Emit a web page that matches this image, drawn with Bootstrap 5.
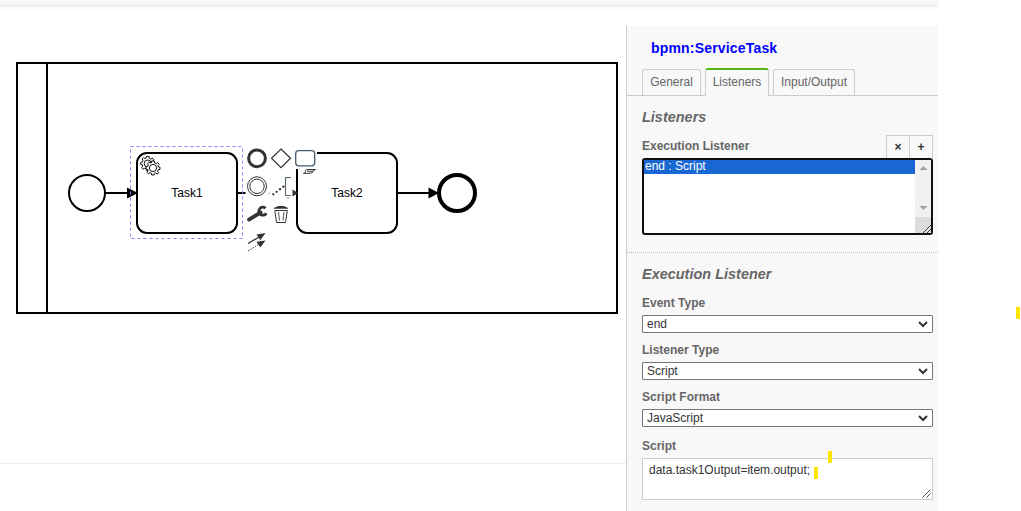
<!DOCTYPE html>
<html lang="en">
<head>
<meta charset="utf-8">
<meta name="viewport" content="width=device-width, initial-scale=1">
<title>Process modeler</title>
<link href="https://cdn.jsdelivr.net/npm/bootstrap@5.3.0/dist/css/bootstrap.min.css" rel="stylesheet">
<style>
  body { font: 12px/16px "Liberation Sans", Arial, sans-serif; color: #666; background: #fff; overflow: hidden; }
  .modeler { width: 938px; height: 511px; }
  .toolbar { height: 26px; flex: none; background: linear-gradient(#f8f8f8 0 5px, #e7e7e7 5px 6px, #f7f7f7 6px, #fff 11px); }
  .canvas { width: 626px; height: 485px; flex: none; }
  .props { border-left: 1px solid #ccc; background: #f8f8f8; height: 485px; }
  .el-title { height: 42px; padding: 13px 0 0 24px; font-size: 14px; line-height: 18px; letter-spacing: .18px; color: #00f; }
  .tabs { height: 28px; padding-left: 15px; border-bottom: 1px solid #ccc; gap: 4px; }
  .tabs a { border: 1px solid #ccc; border-bottom: 0; border-radius: 3px 3px 0 0; height: 26px; line-height: 24px; text-align: center; color: #666; text-decoration: none; background: #f8f8f8; }
  .tabs a.active { height: 28px; border-top: 2px solid #52b415; margin-bottom: -1px; line-height: 25px; }
  .group { padding: 0 5px 0 15px; }
  .group h2 { font-size: 14.4px; line-height: 18px; font-weight: 700; font-style: italic; margin: 0; color: #666; letter-spacing: .04px; }
  .group label { font-weight: 700; line-height: 16px; }
  .sq { width: 24px; height: 23px; border: 1px solid #ccc; border-bottom: 0; background: #f8f8f8; color: #333; font-weight: 700; line-height: 22px; padding: 0; text-align: center; }
  .sq + .sq { margin-left: -1px; }
  .listbox { height: 77px; border: 2px solid #101010; border-radius: 3px; background: #fff; overflow: hidden; }
  .listbox .opt { height: 14px; line-height: 12px; padding-left: 1px; background: #1967d2; color: #fff; }
  .pick { height: 18px; border: 1px solid #767676; border-radius: 1px; background: #fff; color: #333; padding: 0 4px; line-height: 16px; }
  .script { height: 42px; border: 1px solid #ccc; background: #fff; color: #333; padding: 3px 6px; }
  .tick { position: absolute; width: 4px; height: 12px; background: #ffe600; }
  svg { display: block; }
</style>
</head>
<body>
<div class="modeler d-flex flex-column">
  <header class="toolbar"></header>
  <main class="d-flex">
    <svg class="canvas" viewBox="0 26 626 485" font-family="Liberation Sans, Arial, sans-serif" font-size="12">
      <path d="M0 463.5H626" stroke="#eee"/>
      <g fill="none" stroke="#000" stroke-width="2">
        <path d="M17 63H617V313H17ZM47 63V313"/>
        <circle cx="87" cy="193" r="18"/>
        <path d="M105 193H130M238 193H245.500M398 193H430"/>
        <rect x="137" y="153" width="100" height="80" rx="10" fill="#fff"/>
        <rect x="297" y="153" width="100" height="80" rx="10" fill="#fff"/>
        <circle cx="457" cy="193" r="18" stroke-width="4"/>
      </g>
      <path d="M127 187.500L138 193L127 198.500ZM428.500 187.500L439 193L428.500 198.500Z"/>
      <path d="M268.500 192.500H270V194H268.500Z" fill="#bbb"/>
      <text x="187" y="197" text-anchor="middle">Task1</text>
      <text x="347" y="197" text-anchor="middle">Task2</text>
      <!-- service task gears -->
      <defs>
        <path id="gear" d="M-1.400-7H1.400L1.700-5L3.200-4.300L4.700-5.500L6-3.700L4.900-2.200L5.300-1L7-.8V1.400L5.200 1.700L4.600 3.200L5.700 4.700L4 6L2.500 4.900L1.300 5.300L1 7H-1.300L-1.600 5.200L-3 4.700L-4.600 5.800L-6 4.200L-4.900 2.700L-5.300 1.300L-7 1V-1.200L-5.200-1.600L-4.700-3L-5.700-4.500L-4.200-5.900L-2.700-4.900L-1.600-5.300Z"/>
      </defs>
      <g fill="#fff" stroke="#111">
        <g transform="translate(147.700 163.500)"><use href="#gear"/><circle r="3.500"/></g>
        <g transform="translate(153 168)"><use href="#gear"/><circle r="3.600"/></g>
      </g>
      <rect x="130.500" y="146.500" width="112" height="92" fill="none" stroke="#8888ff" stroke-dasharray="3 3"/>
      <!-- context pad -->
      <g fill="#fff" stroke="#333">
        <path d="M246 148H266V168H246ZM246 176H267V197H246ZM294 148H317V169H294Z" stroke="none"/>
        <circle cx="257" cy="158.300" r="8.400" stroke-width="3"/>
        <path d="M281 149L290.500 158.300L281 167.600L271.500 158.300Z" stroke-width="1.200"/>
        <rect x="295.700" y="150.600" width="19" height="15.200" rx="3" stroke="#46596b" stroke-width="1.300"/>
        <path d="M303.500 173.300C307 172.300 303.500 169.500 308 169.500H315.500C312 169.500 314 173.300 310.500 173.300ZM307 171.300H313" stroke-width="1"/>
        <circle cx="257" cy="186.300" r="9.500"/>
        <circle cx="257" cy="186.300" r="7.200"/>
        <path d="M291 177.500H285.500V195.500H291" fill="none" stroke="#566470" stroke-width="1.100"/>
        <path d="M273.300 194.300L284 186.300" fill="none" stroke-width="2.300" stroke-linecap="round" stroke-dasharray="0 4.200"/>
        <path d="M286 197.500H290L288 199.200Z" fill="#aaa" stroke="none"/>
      </g>
      <path d="M292.500 189.500L298 193L292.500 196.500Z" fill="#333"/>
      <path d="M249 219.600L260.500 212.600" stroke="#333" stroke-width="3.800" stroke-linecap="round"/>
      <path d="M265.500 208.200A4 4 0 1 0 266.300 213.200" fill="none" stroke="#333" stroke-width="2.800"/>
      <g fill="none" stroke="#333">
        <path d="M274.800 210.500L276.500 222.500H285.500L287.300 210.500Z"/>
        <path d="M278.500 212L279.500 220.500M284 212L283 220.500" stroke="#555"/>
        <path d="M273.500 208.700C274.500 206.800 277 207.300 278 206H284C285 207.300 287.500 206.800 288.500 208.700Z" fill="#333" stroke="none"/>
        <path d="M248 243.500L260 236.500" stroke-width="1.300"/>
        <path d="M248 251L260 243.500" stroke-dasharray="1.500 1.200"/>
      </g>
      <path d="M265.500 233L256.500 234.600L260.300 240.300ZM265.500 240.500L256.500 241.800L260.300 247.500Z" fill="#333"/>
    </svg>

    <aside class="props flex-grow-1">
      <div class="el-title fw-bold">bpmn:ServiceTask</div>
      <nav class="tabs d-flex align-items-end">
        <a href="#" style="width:59px">General</a>
        <a href="#" class="active" style="width:64px">Listeners</a>
        <a href="#" style="width:82px">Input/Output</a>
      </nav>
      <section class="group" style="padding-top:12px">
        <h2>Listeners</h2>
        <div class="d-flex align-items-end" style="height:32px">
          <label class="me-auto pb-1">Execution Listener</label>
          <button class="sq">×</button><button class="sq">+</button>
        </div>
        <div class="listbox d-flex">
          <div class="flex-grow-1"><div class="opt">end : Script</div></div>
          <svg width="16" height="73">
            <path d="M0 0H16V57H0Z" fill="#f1f1f1"/><path d="M0 57H16V73H0Z" fill="#dcdcdc"/>
            <path d="M4.500 10L8.500 6L12.500 10ZM4.500 46L8.500 50L12.500 46Z" fill="#a3a3a3"/>
            <path d="M8 73L16 65M12 73L16 69" stroke="#444"/>
          </svg>
        </div>
      </section>
      <div style="height:17px"></div>
      <div style="border-top:1px dotted #bbb"></div>
      <section class="group" style="padding-top:12px">
        <h2>Execution Listener</h2>
        <div style="height:12px"></div>
        <label class="d-block" style="height:20px">Event Type</label>
        <div class="pick d-flex align-items-center justify-content-between"><span>end</span><svg width="10" height="8"><path d="M1 2L5 6L9 2" fill="none" stroke="#333" stroke-width="2"/></svg></div>
        <label class="d-block" style="height:29px;padding-top:9px">Listener Type</label>
        <div class="pick d-flex align-items-center justify-content-between"><span>Script</span><svg width="10" height="8"><path d="M1 2L5 6L9 2" fill="none" stroke="#333" stroke-width="2"/></svg></div>
        <label class="d-block" style="height:29px;padding-top:9px">Script Format</label>
        <div class="pick d-flex align-items-center justify-content-between"><span>JavaScript</span><svg width="10" height="8"><path d="M1 2L5 6L9 2" fill="none" stroke="#333" stroke-width="2"/></svg></div>
        <label class="d-block" style="height:31px;padding-top:11px">Script</label>
        <div class="script d-flex justify-content-between"><span>data.task1Output=item.output;</span>
          <svg class="align-self-end" width="9" height="9" style="margin:0 -5px -2px 0"><path d="M.5 8.500L8.500 .5M4.500 8.500L8.500 4.500" stroke="#555"/></svg></div>
      </section>
    </aside>
  </main>
</div>
<!-- highlighter marks over the page -->
<i class="tick" style="left:828px;top:451px"></i>
<i class="tick" style="left:814px;top:467px"></i>
<i class="tick" style="left:1016px;top:307px"></i>
<script src="https://cdn.jsdelivr.net/npm/bootstrap@5.3.0/dist/js/bootstrap.bundle.min.js"></script>
</body>
</html>
